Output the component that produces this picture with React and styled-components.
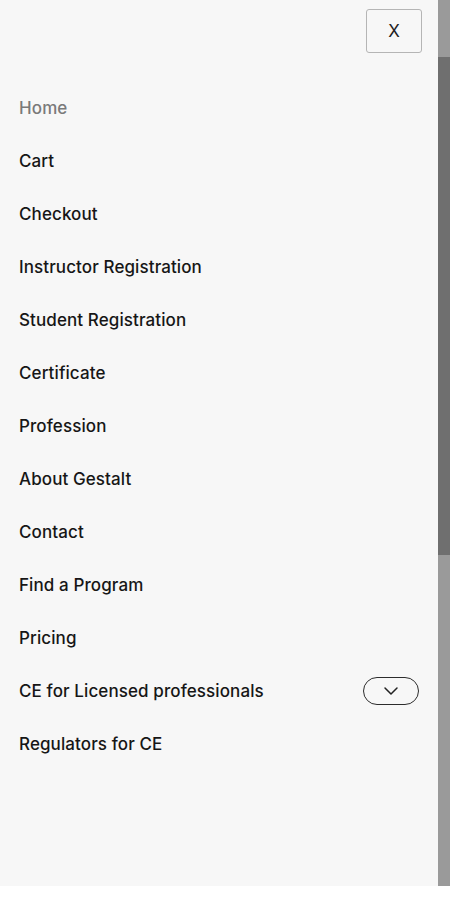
import React from 'react'
import styled, { createGlobalStyle } from 'styled-components'

const GlobalStyle = createGlobalStyle`
    html, body {
        margin: 0;
        padding: 0;
        background: #ffffff;
    }
    body {
        font-family: Inter, "Noto Sans", sans-serif;
    }
`;

const Frame = styled.div`
    display: flex;
    width: 450px;
    height: 886px;
`;

const Panel = styled.div`
    flex: 1;
    display: flex;
    flex-direction: column;
    background-color: #f7f7f7;
`;

const Header = styled.div`
    display: flex;
    justify-content: flex-end;
    padding: 9px 16px 0 0;
`;

const CloseButton = styled.button`
    width: 56px;
    height: 44px;
    border: 1px solid #b5b5b5;
    border-radius: 3px;
    background: #f7f7f7;
    font-family: Inter, sans-serif;
    font-size: 17px;
    color: #222;
    cursor: pointer;
`;

const Nav = styled.ul`
    list-style: none;
    margin: 28px 0 0 0;
    padding: 0;
`;

const Item = styled.li`
    height: 53px;
    display: flex;
    align-items: center;
    justify-content: space-between;
    padding: 0 19px 0 19px;
    font-size: 17px;
    font-weight: 450;
    letter-spacing: 0.1px;
    color: ${({ $active }) => ($active ? '#7a7a7a' : '#161616')};
`;

const ToggleButton = styled.button`
    width: 56px;
    height: 28px;
    border: 1px solid #2c2c2c;
    border-radius: 14px;
    background: transparent;
    display: flex;
    align-items: center;
    justify-content: center;
    padding: 0;
    cursor: pointer;
`;

const ScrollTrack = styled.div`
    width: 12px;
    height: 100%;
    background-color: #9a9a9a;
    display: flex;
    flex-direction: column;
    padding-top: 57px;
    box-sizing: border-box;
`;

const ScrollThumb = styled.div`
    height: 498px;
    background-color: #6f6f6f;
`;

const links = [
    'Home',
    'Cart',
    'Checkout',
    'Instructor Registration',
    'Student Registration',
    'Certificate',
    'Profession',
    'About Gestalt',
    'Contact',
    'Find a Program',
    'Pricing',
    'CE for Licensed professionals',
    'Regulators for CE',
]

const App = () => {
    return (
        <>
            <GlobalStyle />
            <Frame>
                <Panel>
                    <Header>
                        <CloseButton>X</CloseButton>
                    </Header>
                    <Nav>
                        {links.map((label, index) => (
                            <Item key={label} $active={index === 0}>
                                {label}
                                {label === 'CE for Licensed professionals' && (
                                    <ToggleButton aria-label="expand">
                                        <svg width="16" height="10" viewBox="0 0 16 10" fill="none">
                                            <path d="M2 2l6 6 6-6" stroke="#222" strokeWidth="1.5" strokeLinecap="round" strokeLinejoin="round" />
                                        </svg>
                                    </ToggleButton>
                                )}
                            </Item>
                        ))}
                    </Nav>
                </Panel>
                <ScrollTrack>
                    <ScrollThumb />
                </ScrollTrack>
            </Frame>
        </>
    )
}

export default App
